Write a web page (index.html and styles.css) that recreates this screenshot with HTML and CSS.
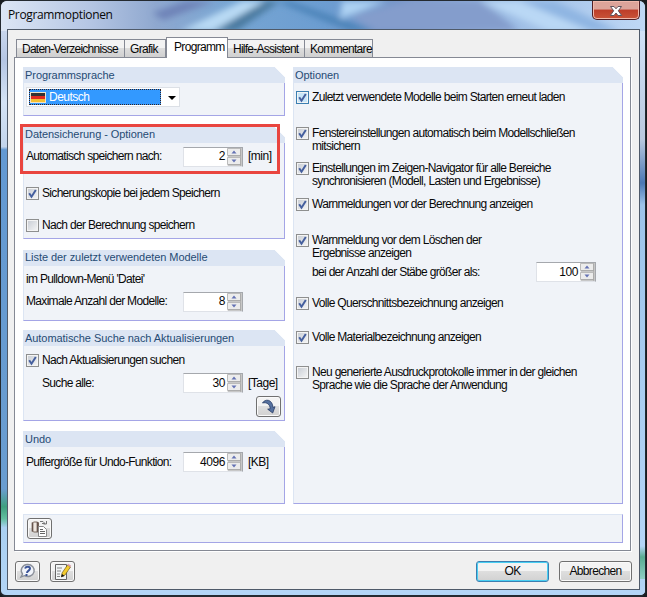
FILE: index.html
```html
<!DOCTYPE html>
<html lang="de">
<head>
<meta charset="utf-8">
<title>Programmoptionen</title>
<link rel="stylesheet" href="styles.css">
</head>
<body>
<svg class="defs" width="0" height="0" aria-hidden="true">
  <symbol id="tick" viewBox="0 0 13 13"><path d="M3.2 6.2 5.5 9.7 9.8 3" fill="none" stroke="#455f9e" stroke-width="2"/></symbol>
  <symbol id="spin" viewBox="0 0 15 18"><path d="M0 0h15v18H0z" fill="#f0f0f0"/><path d="M.5.5h13v7H.5zM.5 9.500h13v7H.5z" fill="#ececec" stroke="#bbb"/><path d="M1 8h13M1 17h13M14 0v18" stroke="#9d9d9d"/><path d="M4.500 5.500 7 2.500l2.500 3zM4.500 11.500 7 14.500l2.500-3z" fill="#6472b4"/></symbol>
</svg>
<div class="window">
  <svg class="glass" viewBox="0 0 647 597" preserveAspectRatio="none" aria-hidden="true">
    <defs>
      <linearGradient id="top" x2="1" y2="0"><stop stop-color="#dce6f5"/><stop offset=".14" stop-color="#b4c5e3"/><stop offset=".24" stop-color="#8fa8cf"/><stop offset=".36" stop-color="#76a5d3"/><stop offset=".5" stop-color="#6c9dd1"/><stop offset=".62" stop-color="#7796c8"/><stop offset=".8" stop-color="#9fbfe6"/><stop offset="1" stop-color="#bfd8f5"/></linearGradient>
      <linearGradient id="side" x2="0" y2="1"><stop stop-color="#dce7f7"/><stop offset=".1" stop-color="#b5c6e3"/><stop offset=".17" stop-color="#d4e3f5"/><stop offset=".245" stop-color="#c3d5ec"/><stop offset=".25" stop-color="#6399d2"/><stop offset=".82" stop-color="#6a9dd0"/><stop offset=".85" stop-color="#3fa07f"/><stop offset=".87" stop-color="#62bfa0"/><stop offset=".885" stop-color="#aad0f1"/><stop offset="1" stop-color="#b3d5f6"/></linearGradient>
      <linearGradient id="right" x2="0" y2="1"><stop stop-color="#cfe2f8"/><stop offset=".2" stop-color="#b9c9df"/><stop offset=".28" stop-color="#4b78b5"/><stop offset=".32" stop-color="#9cc4ea"/><stop offset=".94" stop-color="#b4d5f7"/><stop offset=".96" stop-color="#58ac91"/><stop offset="1" stop-color="#8fcfc4"/></linearGradient>
      <filter id="soft"><feGaussianBlur stdDeviation="3"/></filter>
      <clipPath id="bar"><path d="M0 0h647v30H0z"/></clipPath>
    </defs>
    <path d="M0 0h647v597H0z" fill="url(#side)"/>
    <path d="M638 28h9v552h-9z" fill="url(#right)"/>
    <path d="M7 588h640v9H7z" fill="#b3d5f6"/>
    <path d="M0 0h647v30H0z" fill="url(#top)"/>
    <g clip-path="url(#bar)"><g filter="url(#soft)">
      <path d="M152 12 185 0h30l-52 19z" fill="#6e83b8"/>
      <path d="M180 30 242 0h25l-50 30z" fill="#b9daf4"/>
      <path d="M213 30 265 0h15l-44 30z" fill="#49799f"/>
      <path d="M290 0 375 30h-25L275 0z" fill="#4c83b8"/>
      <path d="M342 0h45l-47 18z" fill="#add2f3"/>
      <path d="M350 15 410 0h70l40 30H376z" fill="#849dcc"/>
      <path d="M480 0h45l90 30h-65z" fill="#bad8f5"/>
      <path d="M520 0h35l65 30h-28z" fill="#8fb5e2"/>
    </g></g>
  </svg>
  <header class="titlebar">
    <h1 class="title">Programmoptionen</h1>
    <button class="close" aria-label="Schließen"><svg width="14" height="12" viewBox="0 0 14 12"><path d="M1.500 1.500h3.500L7 3.800l2-2.300h3.500L9.300 5.800l3.400 4.700H9L7 8l-2 2.500H1.300l3.400-4.700z" fill="#fff" stroke="#60545e"/></svg></button>
  </header>
  <div class="client">
    <nav class="tabs">
      <span class="tab t1">Daten-Verzeichnisse</span><span class="tab t2">Grafik</span><span class="tab t3 active">Programm</span><span class="tab t4">Hilfe-Assistent</span><span class="tab t5">Kommentare</span>
    </nav>
    <main class="page">
      <div class="columns">
        <div class="left">
          <section class="group language">
            <h2>Programmsprache</h2>
            <div class="combo"><span class="selected"><i class="flag"></i><b>Deutsch</b></span><i class="arrow"></i></div>
          </section>
          <section class="group backup">
            <h2>Datensicherung - Optionen</h2>
            <div class="row"><label>Automatisch speichern nach:</label><div class="num"><span>2</span><svg><use href="#spin"/></svg></div><em>[min]</em></div>
            <div class="check c1"><i class="box"><svg><use href="#tick"/></svg></i><p>Sicherungskopie bei jedem Speichern</p></div>
            <div class="check c2"><i class="box"></i><p>Nach der Berechnung speichern</p></div>
            <div class="highlight"></div>
          </section>
          <section class="group recent">
            <h2>Liste der zuletzt verwendeten Modelle</h2>
            <p class="note">im Pulldown-Menü 'Datei'</p>
            <div class="row"><label>Maximale Anzahl der Modelle:</label><div class="num"><span>8</span><svg><use href="#spin"/></svg></div></div>
          </section>
          <section class="group updates">
            <h2>Automatische Suche nach Aktualisierungen</h2>
            <div class="check"><i class="box"><svg><use href="#tick"/></svg></i><p>Nach Aktualisierungen suchen</p></div>
            <div class="row"><label class="indent">Suche alle:</label><div class="num"><span>30</span><svg><use href="#spin"/></svg></div><em>[Tage]</em></div>
            <button class="tool" aria-label="Jetzt suchen"><svg width="19" height="17" viewBox="0 0 19 17"><path d="M3.500 5C6 .5 13.500 1 14 9.500l2-.8-2.300 6.300-5-3.800 2.500-.4C11.300 6.500 7.500 3.800 3.500 5z" fill="#56719f" stroke="#263b66" stroke-width=".8"/></svg></button>
          </section>
          <section class="group undo">
            <h2>Undo</h2>
            <div class="row"><label>Puffergröße für Undo-Funktion:</label><div class="num"><span>4096</span><svg><use href="#spin"/></svg></div><em>[KB]</em></div>
          </section>
        </div>
        <section class="group options">
          <h2>Optionen</h2>
          <div class="check o1"><i class="box hot"><svg><use href="#tick"/></svg></i><p>Zuletzt verwendete Modelle beim Starten erneut laden</p></div>
          <div class="check o2"><i class="box"><svg><use href="#tick"/></svg></i><p>Fenstereinstellungen automatisch beim Modellschließen<br>mitsichern</p></div>
          <div class="check o3"><i class="box"><svg><use href="#tick"/></svg></i><p>Einstellungen im Zeigen-Navigator für alle Bereiche<br>synchronisieren (Modell, Lasten und Ergebnisse)</p></div>
          <div class="check o4"><i class="box"><svg><use href="#tick"/></svg></i><p>Warnmeldungen vor der Berechnung anzeigen</p></div>
          <div class="check o5"><i class="box"><svg><use href="#tick"/></svg></i><p>Warnmeldung vor dem Löschen der<br>Ergebnisse anzeigen</p></div>
          <div class="row"><label class="indent">bei der Anzahl der Stäbe größer als:</label><div class="num"><span>100</span><svg><use href="#spin"/></svg></div></div>
          <div class="check o6"><i class="box"><svg><use href="#tick"/></svg></i><p>Volle Querschnittsbezeichnung anzeigen</p></div>
          <div class="check o7"><i class="box"><svg><use href="#tick"/></svg></i><p>Volle Materialbezeichnung anzeigen</p></div>
          <div class="check o8"><i class="box"></i><p>Neu generierte Ausdruckprotokolle immer in der gleichen<br>Sprache wie die Sprache der Anwendung</p></div>
        </section>
      </div>
      <div class="toolbar"><button class="tool" aria-label="Standard"><svg width="19" height="17" viewBox="0 0 19 17"><path d="M3.500 2h4l1 1v9h-5l-1-1V3z" fill="#eee7e0" stroke="#79695f"/><path d="M2.500 2.500v9M7.500 2v10" stroke="#66544c" stroke-width="1.700"/><path d="M10 1.500h3l2 2h-3M16.500 1v3h-3" fill="none" stroke="#777"/><path d="M8.500 6.500h5l3 3v7h-8z" fill="#fff" stroke="#888"/><path d="M10 9.500h3M10 11.500h5M10 13.500h5" stroke="#666"/></svg></button></div>
    </main>
    <footer class="footer">
      <button class="tool" aria-label="Hilfe"><svg width="19" height="17" viewBox="0 0 19 17"><path d="M9.500 1.500a6.500 6 0 1 1-3 11.200L3 14l1.500-3a6.500 6 0 0 1 5-9.500z" fill="#f1f4fa" stroke="#8b909a" stroke-width="1.400"/><path d="M7 5.500C8 3 12 3 12 5.600c0 2-3 2-3 4.400M8.500 11v2" fill="none" stroke="#3c5598" stroke-width="2"/></svg></button>
      <button class="tool edit" aria-label="Kommentar"><svg width="19" height="17" viewBox="0 0 19 17"><path d="M2.500 1.500h11v15h-11z" fill="#f2f5f6" stroke="#656565"/><path d="M4 5h5M4 8h4M4 11h3M4 13.500h3" stroke="#888"/><path d="M9 10 14.500 2l3 2L12 12l-3.500 2z" fill="#f4cc2d" stroke="#705b20" stroke-width=".7"/><path d="m14.500 2 1-1.300 2.700 2-1 1.300z" fill="#dc9caf"/><path d="m8 14 1-3 2.500 2z" fill="#111"/></svg></button>
      <button class="action ok">OK</button><button class="action cancel">Abbrechen</button>
    </footer>
  </div>
</div>
</body>
</html>
```
FILE: styles.css
```css
* { box-sizing: border-box; }
body { margin: 0; width: 647px; height: 597px; overflow: hidden; background: #181c20; color: #080808; font: 12px/13px "Liberation Sans", sans-serif; letter-spacing: -.68px; }
h1, h2, p { margin: 0; font-weight: normal; }
button { padding: 0; font: inherit; color: inherit; letter-spacing: inherit; }
.defs { position: absolute; }
.window { position: relative; width: 646px; height: 597px; border: 1px solid #242a30; border-bottom-width: 2px; border-radius: 7px 7px 6px 6px; overflow: hidden; }
.glass { position: absolute; inset: 0; width: 645px; height: 595px; }
.titlebar { position: relative; height: 28px; display: flex; justify-content: space-between; padding: 0 5px 0 7px; }
.title { font: 12px/27px "Open Sans", sans-serif; letter-spacing: -.35px; }
.close { width: 48px; height: 19px; border: 1px solid #511f25; border-top: 0; border-radius: 0 0 5px 5px; background: linear-gradient(#dca49a 0 45%, #bd3d29 50%, #c95439); box-shadow: inset 0 0 0 1px #f0b9ac; }
.close svg { display: block; margin: 2px auto 0; }
.client { position: relative; margin-left: 6px; width: 633px; height: 561px; border: 1px solid #4f5a69; background: #f0f0f0; }
.tabs { display: flex; align-items: flex-end; height: 27px; padding-left: 8px; position: relative; z-index: 1; }
.tab { height: 18px; border: 1px solid #858994; border-bottom: 0; background: linear-gradient(#f3f3f3 45%, #ddd 50%, #d0d0d0); line-height: 19px; padding-left: 5px; white-space: nowrap; }
.t1 { width: 109px; letter-spacing: -.75px; } .t2 { width: 41px; } .t3 { width: 62px; } .t4 { width: 77px; letter-spacing: -.75px; } .t5 { width: 68px; }
.tab + .tab { border-left-width: 0; }
.tab.active { height: 21px; margin-bottom: -1px; padding-left: 7px; border-left-width: 1px; background: #fff; }
.page { width: 617px; height: 494px; margin-left: 6px; border: 1px solid #858994; background: #fff; padding: 9px 7px 7px 8px; box-shadow: 1px 1px #fff; }
.columns { display: flex; gap: 8px; height: 437px; }
.left { width: 262px; display: flex; flex-direction: column; }
.group { position: relative; background: #f0f3f8; border: 1px solid #a4a5e6; border-top: 0; border-left-color: #dce5f3; }
.group h2 { height: 16px; margin: 0 -1px 1px; padding-left: 2px; background: linear-gradient(225deg, #fff 7px, #dce5f3 7.5px); color: #264b74; font-size: 11px; line-height: 17px; letter-spacing: -.06px; white-space: nowrap; }
.language { height: 49px; margin-bottom: 11px; }
.backup { height: 112px; margin-bottom: 11px; }
.recent { height: 72px; margin-bottom: 9px; }
.updates { height: 91px; margin-bottom: 10px; }
.undo { height: 73px; }
.group.backup h2, .group.recent h2 { line-height: 15px; }
.options { width: 330px; height: 437px; }
.combo { width: 154px; height: 20px; margin: 4px 2px; padding: 2px; background: #fff; border: 1px solid #dce0e6; display: flex; }
.selected { width: 132px; height: 16px; margin-top: -1px; background: #3399ff; border: 1px dotted #322; color: #fff; display: flex; gap: 3px; align-items: center; line-height: 15px; letter-spacing: -.5px; }
.selected b { font-weight: normal; padding-top: 1px; }
.flag { width: 16px; height: 11px; border: 1px solid #eee3c8; background: linear-gradient(#333 33%, #e02b20 33% 66%, #f4bf32 66%); }
.arrow { margin: 6px 0 0 7px; width: 0; height: 0; border: 4px solid transparent; border-top-color: #000; }
.row { display: flex; align-items: center; height: 20px; }
.row label { width: 159px; padding-left: 2px; white-space: nowrap; }
.row label.indent { padding-left: 18px; }
.row em { font-style: normal; margin-left: 5px; letter-spacing: -.5px; }
.num { width: 60px; height: 20px; border: 1px solid #a5a8ad; border-left-color: #dfe2e8; border-bottom-color: #dfe2e8; background: #fff; display: flex; justify-content: flex-end; align-items: center; letter-spacing: -.4px; }
.num svg { width: 15px; height: 18px; margin-left: 2px; }
.check { display: flex; gap: 3px; padding-left: 2px; align-items: flex-start; }
.check p { white-space: nowrap; }
.box { flex: none; width: 13px; height: 13px; border: 1px solid #8e8f8f; background: linear-gradient(135deg, #c6cbd3, #f7f7f7); box-shadow: inset 0 0 0 1px #f4f4f4; }
.box svg { display: block; width: 13px; height: 13px; margin: -1px; }
.box.hot { border-color: #3c7fb1; background: #c9e6f8; }
.backup .row { margin-top: 4px; }
.c1 { margin-top: 20px; } .c2 { margin-top: 19px; }
.highlight { position: absolute; left: -4px; top: -3px; width: 260px; height: 50px; border: 3px solid #e9453f; }
.note { padding: 6px 0 0 2px; }
.recent .row { margin-top: 6px; }
.updates .check { margin-top: 8px; }
.updates .row { margin-top: 6px; }
.tool { width: 25px; height: 21px; display: grid; place-items: center; border: 1px solid #707070; border-radius: 3px; background: linear-gradient(#f3f3f3 45%, #dedede 50%, #d1d1d1); box-shadow: inset 0 0 0 1px #fafafa; }
.updates .tool { margin: 3px 0 0 232px; }
.undo .row { margin-top: 5px; }
.o1 { margin-top: 8px; } .o2 { margin-top: 23px; } .o3 { margin-top: 9px; } .o4 { margin-top: 10px; } .o5 { margin-top: 23px; }
.options .row { margin-top: 2px; } .options .row label { width: 242px; }
.o6 { margin-top: 15px; } .o7 { margin-top: 21px; } .o8 { margin-top: 22px; }
.toolbar { margin-top: 10px; width: 600px; height: 29px; border: 1px solid #a4a5e6; border-top-color: #dce5f3; border-left-color: #dce5f3; padding: 3px; background: #f0f3f8; }
.footer { display: flex; align-items: center; height: 21px; margin: 10px 7px 0; }
.edit { margin-left: 10px; }
.action { height: 21px; width: 73px; border: 1px solid #707070; border-radius: 3px; background: linear-gradient(#f3f3f3 45%, #dedede 50%, #d1d1d1); box-shadow: inset 0 0 0 1px #fafafa; }
.ok { margin-left: auto; border-color: #3c7fb1; box-shadow: inset 0 0 0 1px #48cff3; }
.cancel { margin-left: 10px; }
```
